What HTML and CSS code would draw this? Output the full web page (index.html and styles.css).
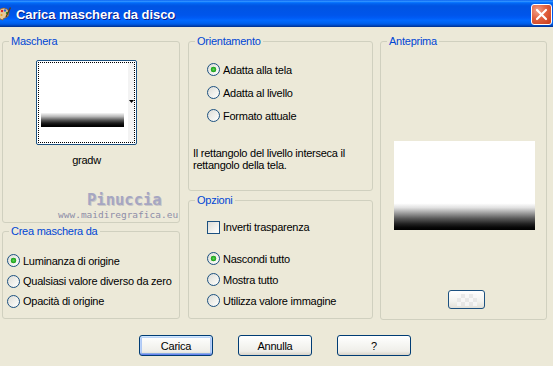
FILE: index.html
```html
<!DOCTYPE html>
<html lang="it">
<head>
<meta charset="utf-8">
<title>Carica maschera da disco</title>
<link rel="stylesheet" href="styles.css">
</head>
<body>
<div class="window">
  <div class="titlebar">
    <svg class="app-icon" width="12" height="15" viewBox="0 0 12 15">
      <path d="M0 5 Q1 2 5 2 Q10 3 10 7 Q10 11 6 12 Q4 12 4 14 Q1 14 0 11 Z" fill="#e8c89a" stroke="#8a5a2a" stroke-width="0.8"/>
      <circle cx="3" cy="5" r="1.2" fill="#d22"/>
      <circle cx="6" cy="4.5" r="1.2" fill="#2a5fd8"/>
      <circle cx="8" cy="7" r="1.2" fill="#2a9a2a"/>
      <circle cx="2.5" cy="9" r="1.1" fill="#e8a020"/>
      <path d="M7 11 L11.5 1.5" stroke="#5a3a1a" stroke-width="1.4"/>
    </svg>
    <span class="title">Carica maschera da disco</span>
    <span class="close-btn">
      <svg width="13" height="13" viewBox="0 0 13 13"><path d="M2 2 L11 11 M11 2 L2 11" stroke="#fff" stroke-width="2.2" stroke-linecap="round"/></svg>
    </span>
  </div>

  <div class="main">
    <div class="col col1">
      <fieldset class="group g-maschera">
        <legend>Maschera</legend>
        <div class="mask-box">
          <div class="mask-focus">
            <div class="mask-area"><div class="mask-bar"></div></div>
            <div class="mask-drop">
              <svg width="5" height="3" viewBox="0 0 5 3"><polygon points="0,0 5,0 2.5,3" fill="#000"/></svg>
            </div>
          </div>
        </div>
        <div class="mask-name">gradw</div>
      </fieldset>
      <fieldset class="group g-crea">
        <legend>Crea maschera da</legend>
        <div class="opts opts-crea">
          <div class="opt"><span class="radio checked"></span><span>Luminanza di origine</span></div>
          <div class="opt"><span class="radio"></span><span>Qualsiasi valore diverso da zero</span></div>
          <div class="opt"><span class="radio"></span><span>Opacità di origine</span></div>
        </div>
      </fieldset>
    </div>

    <div class="col col2">
      <fieldset class="group g-orient">
        <legend>Orientamento</legend>
        <div class="opts opts-orient">
          <div class="opt"><span class="radio checked"></span><span>Adatta alla tela</span></div>
          <div class="opt"><span class="radio"></span><span>Adatta al livello</span></div>
          <div class="opt"><span class="radio"></span><span>Formato attuale</span></div>
        </div>
        <p class="note">Il rettangolo del livello interseca il rettangolo della tela.</p>
      </fieldset>
      <fieldset class="group g-opzioni">
        <legend>Opzioni</legend>
        <div class="opt opt-check"><span class="checkbox"></span><span>Inverti trasparenza</span></div>
        <div class="opts opts-opz">
          <div class="opt"><span class="radio checked"></span><span>Nascondi tutto</span></div>
          <div class="opt"><span class="radio"></span><span>Mostra tutto</span></div>
          <div class="opt"><span class="radio"></span><span>Utilizza valore immagine</span></div>
        </div>
      </fieldset>
    </div>

    <div class="col col3">
      <fieldset class="group g-antep">
        <legend>Anteprima</legend>
        <div class="preview"></div>
        <div class="preview-btn"><span class="checker"></span></div>
      </fieldset>
    </div>
  </div>

  <div class="buttons">
    <button class="btn default">Carica</button>
    <button class="btn">Annulla</button>
    <button class="btn">?</button>
  </div>

  <div class="watermark">
    <div class="wm-name">Pinuccia</div>
    <div class="wm-url">www.maidiregrafica.eu</div>
  </div>
</div>
</body>
</html>
```

FILE: styles.css
```css
* { box-sizing: border-box; }
html, body { margin: 0; padding: 0; }
body {
  width: 553px;
  height: 366px;
  overflow: hidden;
  background: #ECE9D8;
  font-family: "Liberation Sans", Arial, sans-serif;
  font-size: 11px;
  letter-spacing: -0.25px;
  color: #000;
}
.window {
  position: relative;
  width: 553px;
  height: 366px;
  background: #ECE9D8;
  display: flex;
  flex-direction: column;
}

/* Title bar */
.titlebar {
  height: 27px;
  display: flex;
  align-items: center;
  background: linear-gradient(180deg, #0058EE 0%, #3593FF 4%, #288EFF 6%, #127DFF 8%, #036FFC 10%, #0262EE 14%, #0057E5 20%, #0054E3 24%, #0055EB 56%, #005BF5 66%, #026AFE 76%, #0062EF 86%, #0052D6 92%, #0040AB 96%, #003092 100%);
  color: #fff;
}
.app-icon { margin-left: -1px; flex: none; }
.title {
  margin-left: 5px;
  font-family: "Liberation Sans", Arial, sans-serif;
  font-weight: bold;
  font-size: 13px;
  letter-spacing: -0.05px;
  text-shadow: 1px 1px 0 #0A1883;
  flex: 1;
  padding-top: 1px;
}
.close-btn {
  width: 21px;
  height: 21px;
  margin-right: 1px;
  margin-top: 2px;
  border: 1px solid #fff;
  border-radius: 3px;
  background: radial-gradient(circle at 30% 30%, #F2A18A 0%, #E2613F 45%, #C73A1A 100%);
  display: flex;
  align-items: center;
  justify-content: center;
}

/* Main layout */
.main {
  display: flex;
  padding: 7px 0 0 2px;
}
.col { display: flex; flex-direction: column; }
.col1 { width: 178px; }
.col2 { width: 185px; margin-left: 8px; }
.col3 { width: 167px; margin-left: 7px; }

.group {
  margin: 0;
  padding: 0;
  min-width: 0;
  border: 1px solid #D0D0BF;
  border-radius: 3px;
}
.group legend {
  margin-left: 6px;
  padding: 0 2px;
  line-height: 14px;
  color: #0046D5;
}
.g-maschera { height: 189px; }
.g-crea { height: 95px; margin-top: 1px; }
.g-orient { height: 157px; }
.g-opzioni { height: 126px; margin-top: 2px; }
.g-antep { height: 286px; }

/* Maschera */
.mask-box {
  width: 101px;
  height: 85px;
  margin: 12px 0 0 33px;
  border: 1px solid #1C5180;
  border-radius: 2px;
  background: #fff;
  padding: 1px;
}
.mask-focus {
  width: 100%;
  height: 100%;
  border: 1px dotted #000;
  display: flex;
}
.mask-area { flex: 1; padding: 50px 0 0 2px; }
.mask-bar {
  width: 83px;
  height: 14px;
  background: linear-gradient(180deg, #F6F6F6 0%, #B8B8B8 25%, #5A5A5A 50%, #1C1C1C 72%, #050505 88%, #000 100%);
}
.mask-drop {
  width: 6px;
  background: #F3F3F3;
  padding-top: 37px;
  display: flex;
  justify-content: center;
}
.mask-drop svg { display: block; }
.mask-name {
  text-align: center;
  width: 101px;
  margin: 9px 0 0 33px;
  line-height: 13px;
}

/* Options */
.opt {
  display: flex;
  align-items: center;
  height: 20px;
  white-space: nowrap;
}
.opts-crea { margin: 12px 0 0 4px; }
.opts-crea .opt:first-child { height: 21px; }
.opts-orient { margin: 10px 0 0 18px; }
.opts-orient .opt { height: 23px; }
.opts-opz { margin: 11px 0 0 18px; }
.opts-opz .opt { height: 21px; }
.opt-check { margin: 10px 0 0 18px; }

.radio {
  flex: none;
  width: 13px;
  height: 13px;
  margin-right: 3px;
  border: 1px solid #1C5180;
  border-radius: 50%;
  background: linear-gradient(135deg, #DCDCD7 0%, #F2F2EE 60%, #FFFFFF 100%);
}
.radio.checked {
  background:
    radial-gradient(circle at 50% 50%, #5ED65A 0, #2FB12B 1.6px, #21A121 2.6px, rgba(33,161,33,0) 3.1px),
    linear-gradient(135deg, #DCDCD7 0%, #F2F2EE 60%, #FFFFFF 100%);
}
.checkbox {
  flex: none;
  width: 13px;
  height: 13px;
  margin-right: 3px;
  border: 1px solid #1C5180;
  background: linear-gradient(135deg, #DCDCD7 0%, #F2F2EE 60%, #FFFFFF 100%);
}

.note {
  margin: 20px 0 0 4px;
  line-height: 12px;
  width: 170px;
}

/* Anteprima */
.preview {
  width: 141px;
  height: 89px;
  margin: 93px 0 0 13px;
  background: linear-gradient(180deg, #FFFFFF 0%, #FFFFFF 70%, #E0E0E0 75%, #A8A8A8 80%, #5A5A5A 87%, #222 93%, #080808 97%, #000 100%);
}
.preview-btn {
  width: 37px;
  height: 19px;
  margin: 60px 0 0 67px;
  border: 1px solid #1C5180;
  border-radius: 3px;
  background: linear-gradient(180deg, #FFFFFF 0%, #F3F3EF 60%, #E2E0D8 100%);
  display: flex;
  align-items: center;
  justify-content: center;
}
.checker {
  width: 20px;
  height: 12px;
  background-color: #F8F8F8;
  background-image: conic-gradient(#E6E6E6 25%, transparent 0 50%, #E6E6E6 0 75%, transparent 0);
  background-size: 8px 8px;
  opacity: 0.8;
}

/* Buttons */
.buttons {
  display: flex;
  margin: 15px 0 0 139px;
  gap: 25px;
}
.btn {
  width: 74px;
  height: 21px;
  padding: 0;
  border: 1px solid #003C74;
  border-radius: 3px;
  background: linear-gradient(180deg, #FFFFFF 0%, #F7F7F4 40%, #EFEEE9 80%, #D8D3C8 100%);
  font-family: "Liberation Sans", Arial, sans-serif;
  font-size: 11px;
  letter-spacing: -0.25px;
  color: #000;
}
.btn.default {
  box-shadow: inset 0 1px 0 #CEE7FF, inset 0 -1px 0 #6982EE, inset 1px 0 0 #B9D1FA, inset -1px 0 0 #B9D1FA, inset 0 2px 0 #BCD4F6, inset 0 -2px 0 #89ADE4, inset 2px 0 0 #AEC8F4, inset -2px 0 0 #AEC8F4;
}

/* Watermark overlay */
.watermark {
  position: absolute;
  left: 58px;
  top: 191px;
  pointer-events: none;
  letter-spacing: 0;
}
.wm-name {
  margin-left: 29px;
  font-family: "DejaVu Sans Mono", monospace;
  font-weight: bold;
  font-size: 15.5px;
  line-height: 18px;
  color: #A6A6C2;
  text-shadow: 1px 1px 0 rgba(120,120,150,0.3);
}
.wm-url {
  font-family: "DejaVu Sans Mono", monospace;
  font-size: 9.5px;
  line-height: 12px;
  color: #8E8EA8;
}
```
